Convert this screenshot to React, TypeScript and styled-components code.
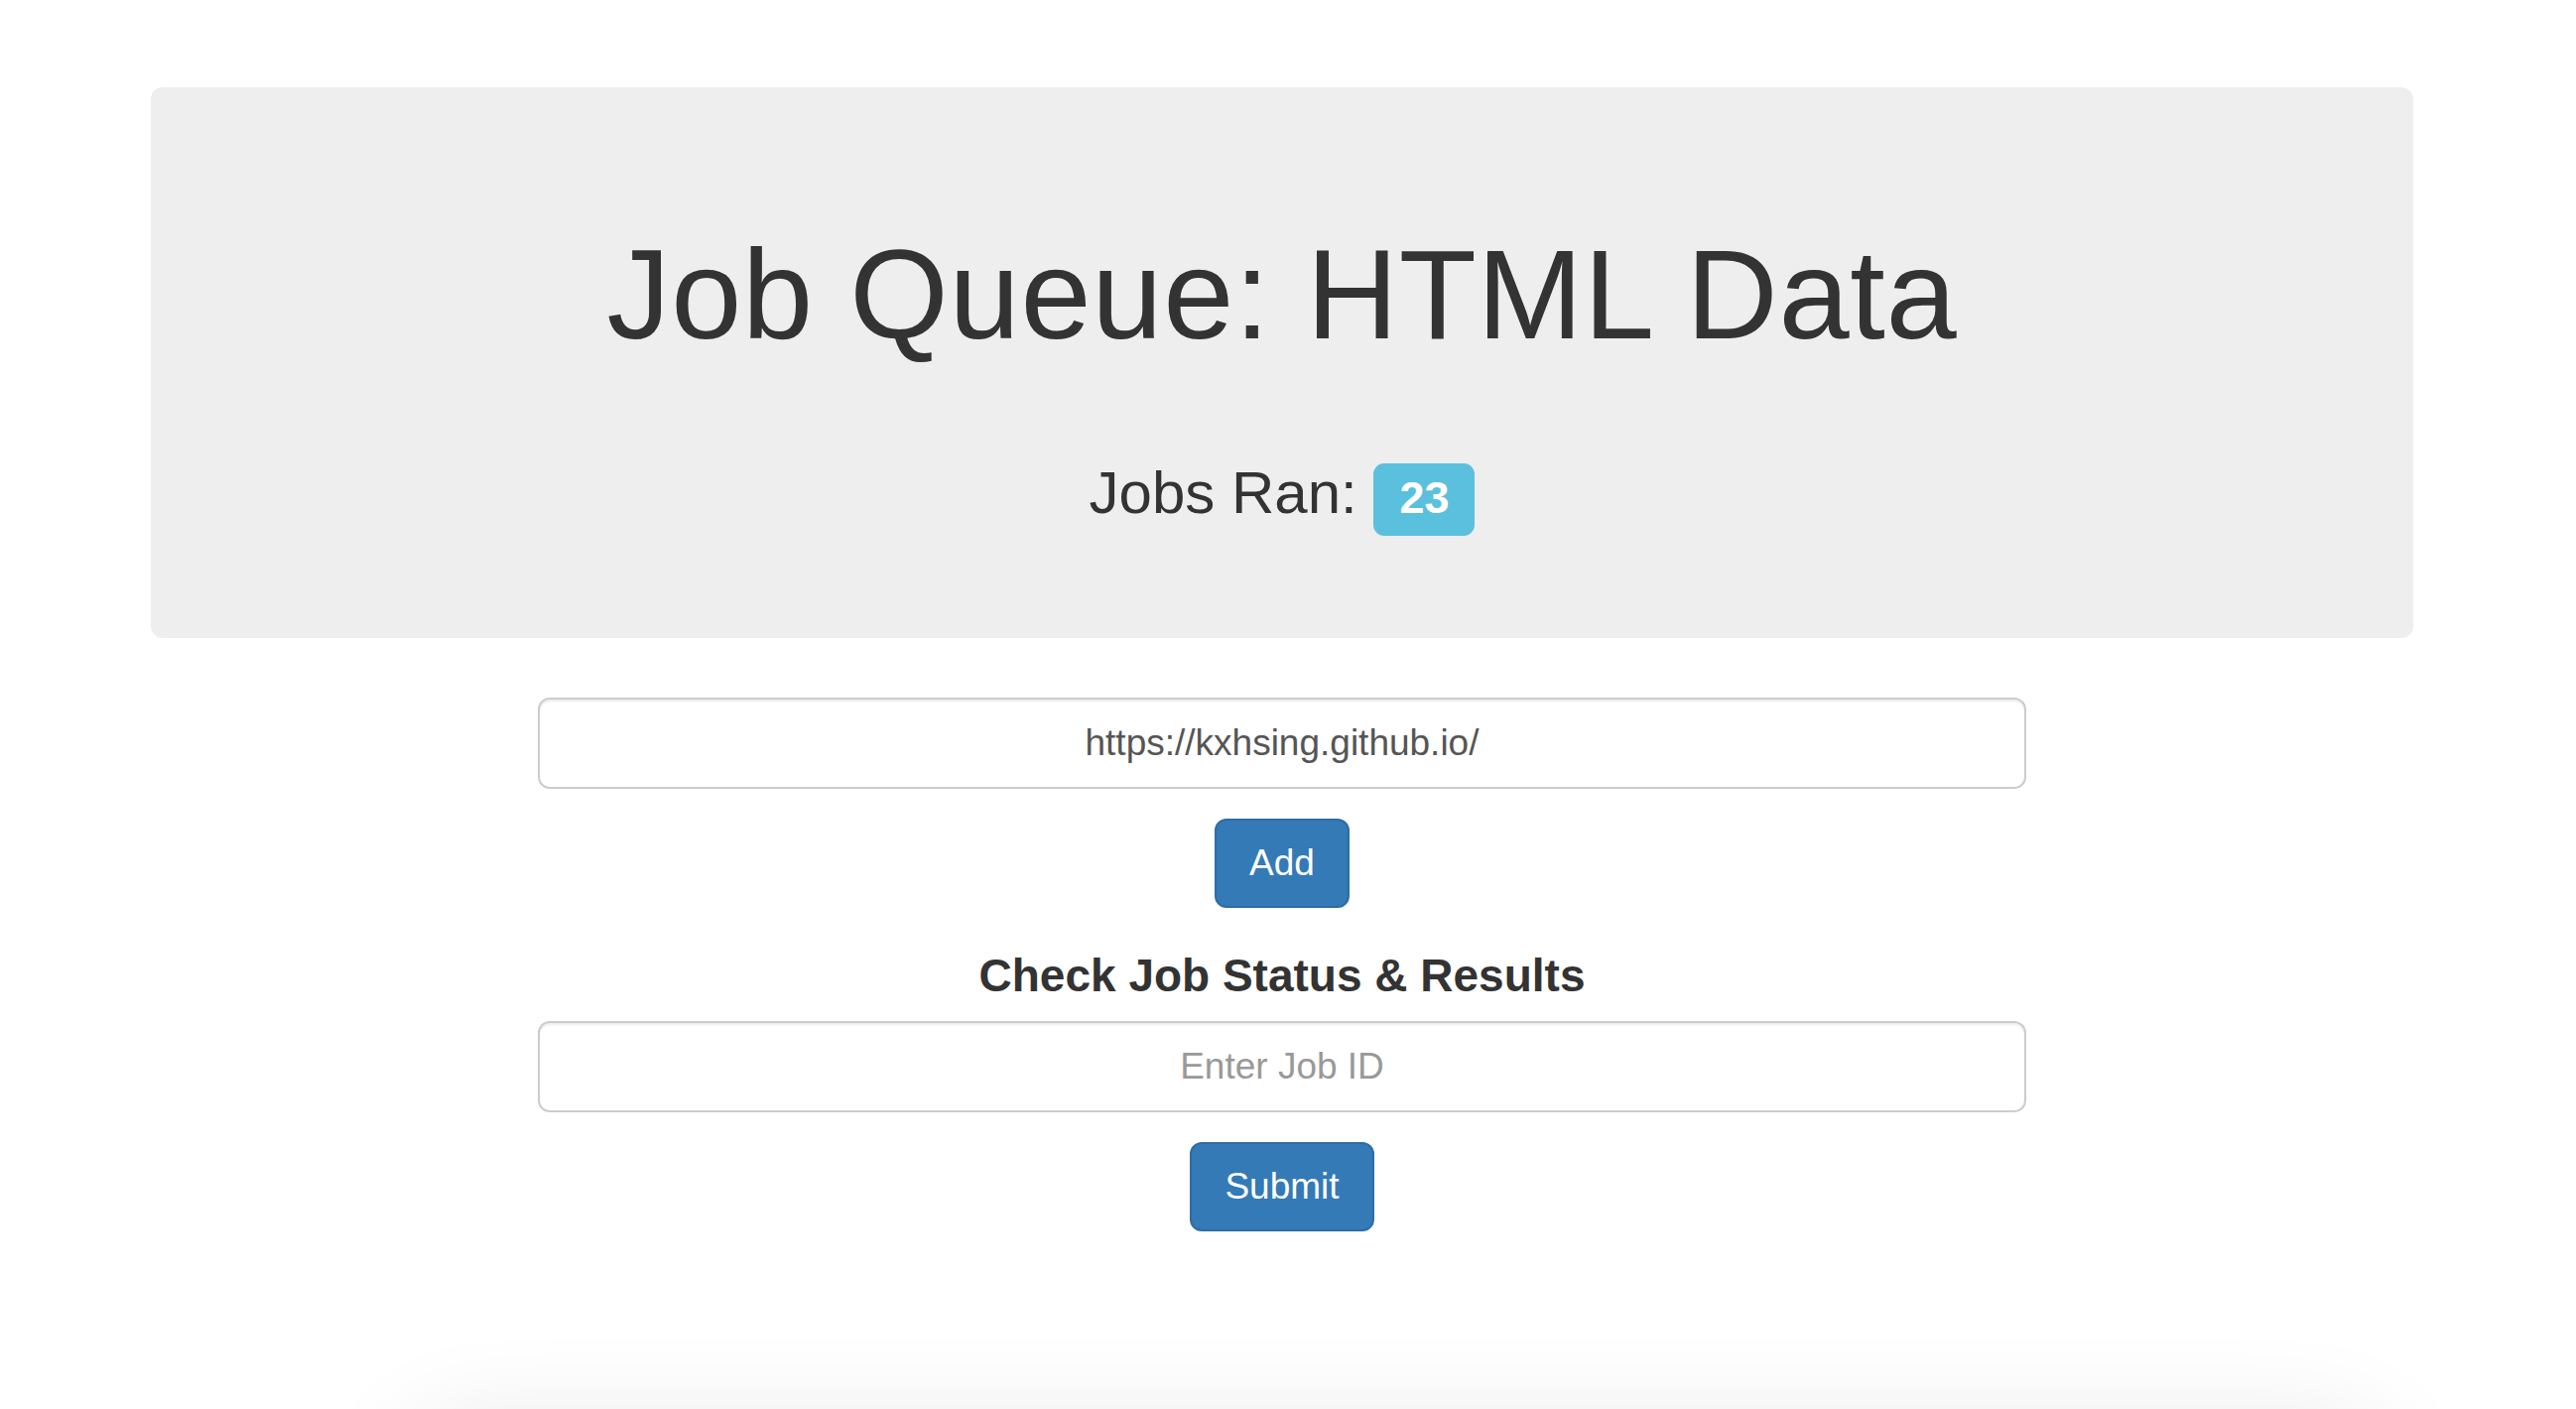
import React from 'react'
import styled, { createGlobalStyle } from 'styled-components'

const GlobalStyle = createGlobalStyle`
  html, body {
    margin: 0;
    padding: 0;
    background: #fff;
    overflow: hidden;
  }
  body {
    font-family: "Liberation Sans", Arial, sans-serif;
    color: #333;
  }
  * {
    box-sizing: border-box;
  }
`

export default function App() {
  return (
    <>
      <GlobalStyle />
      <Page>
        <Container>
          <Jumbotron>
            <Title>Job Queue: HTML Data</Title>
            <Subtitle>
              Jobs Ran: <Badge>23</Badge>
            </Subtitle>
          </Jumbotron>

          <Form onSubmit={(e) => e.preventDefault()}>
            <Input type="text" defaultValue="https://kxhsing.github.io/" />
            <Button type="submit">Add</Button>
          </Form>

          <Form onSubmit={(e) => e.preventDefault()}>
            <SectionTitle>Check Job Status &amp; Results</SectionTitle>
            <Input type="text" placeholder="Enter Job ID" />
            <Button type="submit">Submit</Button>
          </Form>

          <Results />
        </Container>
      </Page>
    </>
  )
}

const Page = styled.div`
  height: 1420px;
  padding-top: 88px;
  overflow: hidden;
`

const Container = styled.div`
  display: flex;
  flex-direction: column;
  align-items: center;
  width: 2280px;
  margin-left: 152px;
`

const Jumbotron = styled.div`
  width: 100%;
  background: #eee;
  border-radius: 12px;
  padding: 139px 0 113px;
  text-align: center;
`

const Title = styled.h1`
  margin: 0;
  font-size: 128px;
  font-weight: 400;
  line-height: 1.1;
  letter-spacing: 0.7px;
  color: #333;
`

const Subtitle = styled.h2`
  margin: 96px 0 0;
  font-size: 60px;
  font-weight: 400;
  line-height: 1.1;
  color: #333;
`

const Badge = styled.span`
  display: inline;
  background: #5bc0de;
  color: #fff;
  font-size: 45px;
  font-weight: 700;
  line-height: 1;
  padding: 9px 26px 13px;
  border-radius: 11px;
  vertical-align: baseline;
`

const Form = styled.form`
  display: flex;
  flex-direction: column;
  align-items: center;
  width: 1500px;
  margin-top: 60px;

  & + & {
    margin-top: 43px;
  }
`

const SectionTitle = styled.h3`
  margin: 0 0 21px;
  font-size: 46px;
  font-weight: 700;
  line-height: 1.1;
  color: #333;
`

const Input = styled.input`
  width: 100%;
  height: 92px;
  padding: 20px 32px;
  border: 2px solid #ccc;
  border-radius: 12px;
  box-shadow: inset 0 2px 2px rgba(0, 0, 0, 0.075);
  font-family: "Liberation Sans", Arial, sans-serif;
  font-size: 37px;
  text-align: center;
  color: #555;
  outline: none;

  &::placeholder {
    color: #999;
  }
`

const Button = styled.button`
  margin-top: 30px;
  height: 90px;
  padding: 0 33px;
  font-family: "Liberation Sans", Arial, sans-serif;
  font-size: 37px;
  color: #fff;
  background: #337ab7;
  border: 2px solid #2e6da4;
  border-radius: 12px;
  cursor: pointer;
`

const Results = styled.div`
  width: 1990px;
  height: 300px;
  margin: 205px 0 0 230px;
  background: #fff;
  border-radius: 60px;
  box-shadow: 0 0 110px rgba(0, 0, 0, 0.12);
`
